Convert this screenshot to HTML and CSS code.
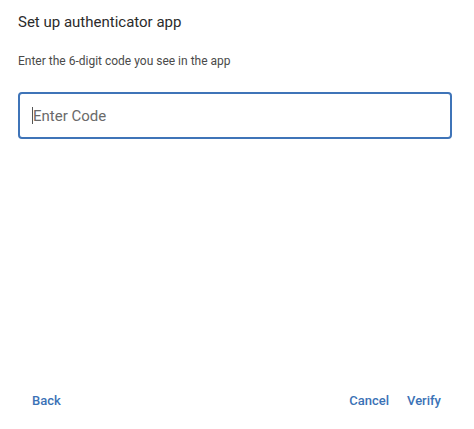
FILE: index.html
```html
<!DOCTYPE html>
<html>
<head>
<meta charset="utf-8">
<link rel="stylesheet" href="styles.css">
</head>
<body>
<div class="dialog">
  <h1 class="title">Set up authenticator app</h1>
  <p class="subtitle">Enter the 6-digit code you see in the app</p>
  <div class="field">
    <span class="caret"></span><span class="placeholder">Enter Code</span>
  </div>
  <div class="spacer"></div>
  <div class="actions">
    <button class="btn">Back</button>
    <div class="right">
      <button class="btn">Cancel</button>
      <button class="btn">Verify</button>
    </div>
  </div>
</div>
</body>
</html>
```

FILE: styles.css
```css
html, body {
  margin: 0;
  padding: 0;
  background: #ffffff;
}
body {
  font-family: Roboto, "Liberation Sans", sans-serif;
  width: 474px;
  height: 429px;
  overflow: hidden;
}
.dialog {
  box-sizing: border-box;
  height: 429px;
  padding: 12px 22px 0 18px;
  display: flex;
  flex-direction: column;
}
.title {
  margin: 0;
  font-size: 15px;
  font-weight: 400;
  color: #2b2b2b;
  line-height: 20px;
  letter-spacing: 0;
}
.subtitle {
  margin: 21px 0 0 0;
  font-size: 12px;
  color: #4a4a4a;
  line-height: 16px;
}
.field {
  margin-top: 23px;
  height: 47px;
  box-sizing: border-box;
  border: 2px solid #3f74b8;
  border-radius: 4px;
  display: flex;
  align-items: center;
  padding-left: 12px;
}
.caret {
  width: 1px;
  height: 17px;
  background: #555;
}
.placeholder {
  font-size: 15px;
  color: #6a6a6a;
}
.spacer {
  flex: 1;
}
.actions {
  display: flex;
  justify-content: space-between;
  align-items: center;
  height: 30px;
  margin-bottom: 14px;
  padding: 0 11px 0 14px;
}
.right {
  display: flex;
  gap: 18px;
}
.btn {
  border: 0;
  background: none;
  padding: 0;
  font-family: Roboto, "Liberation Sans", sans-serif;
  font-size: 13px;
  font-weight: 500;
  color: #3b72b6;
  cursor: pointer;
}
```
